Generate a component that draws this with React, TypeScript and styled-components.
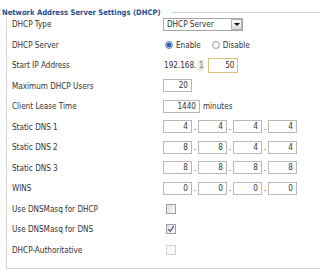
import React from 'react';
import styled, { createGlobalStyle } from 'styled-components';

const Global = createGlobalStyle`
  html, body { margin: 0; padding: 0; background: #fff; }
  body {
    font-family: "DejaVu Sans Condensed", "Liberation Sans", sans-serif;
    font-size: 8.1px;
    color: #333;
  }
`;

const Page = styled.div`
  width: 320px;
  height: 275px;
  overflow: hidden;
  padding-top: 6px;
  box-sizing: border-box;
`;

const Header = styled.div`
  position: relative;
  z-index: 1;
  display: flex;
  align-items: center;
  height: 13px;
  padding-left: 2px;
`;

const Title = styled.span`
  font-weight: bold;
  font-size: 7.6px;
  color: #1f4f93;
  background: #fff;
  padding-right: 10px;
  white-space: nowrap;
`;

const Rule = styled.div`
  flex: 1;
  height: 1px;
  background: #d4d4d4;
`;

const Body = styled.div`
  margin: -5px 0 0 6px;
  border-left: 1px solid #d4d4d4;
  border-bottom: 1px solid #d4d4d4;
  padding: 0 0 8px 5px;
`;

const Row = styled.div`
  display: grid;
  grid-template-columns: 151px 1fr;
  align-items: center;
  height: 20.5px;
`;

const Label = styled.span`
  white-space: nowrap;
`;

const Value = styled.div`
  display: flex;
  align-items: center;
  white-space: nowrap;
`;

const Select = styled.div`
  display: flex;
  width: 80px;
  height: 13px;
  border: 1px solid #a6a6a6;
  box-sizing: border-box;
  background: #fff;
`;

const SelectText = styled.span`
  flex: 1;
  padding-left: 3px;
  line-height: 11px;
`;

const SelectBtn = styled.span`
  width: 11px;
  border: 1px solid #b4b4b4;
  box-sizing: border-box;
  background: linear-gradient(#fbfbfb, #dcdcdc);
  display: flex;
  align-items: center;
  justify-content: center;
  &::after {
    content: "";
    border-left: 3px solid transparent;
    border-right: 3px solid transparent;
    border-top: 3px solid #111;
  }
`;

const Radio = styled.span<{ $on?: boolean }>`
  width: 8px;
  height: 8px;
  border-radius: 50%;
  border: 1px solid ${p => (p.$on ? '#6d83a8' : '#a4a4a4')};
  background: ${p =>
    p.$on
      ? 'radial-gradient(circle, #2d5db8 0 2px, #b9cbe6 2.6px, #eef2f8 4px)'
      : 'radial-gradient(circle, #fafafa 0 2px, #e3e3e3 4px)'};
  box-sizing: border-box;
  margin-left: 2px;
  margin-right: 3px;
`;

const RadioText = styled.span<{ $gap?: number }>`
  margin-right: ${p => p.$gap ?? 0}px;
`;

const Fixed = styled.span`
  margin-left: 1px;
`;

const Locked = styled.span`
  display: inline-block;
  width: 6px;
  text-align: center;
  background: #ececec;
  color: #777;
  margin-left: 2px;
  margin-right: 4px;
  line-height: 11px;
`;

const Box = styled.span<{ $w: number; $hot?: boolean }>`
  display: inline-block;
  width: ${p => p.$w}px;
  height: ${p => (p.$hot ? 15 : 13)}px;
  line-height: ${p => (p.$hot ? 13 : 11)}px;
  border: 1px solid ${p => (p.$hot ? '#dcc276' : '#b9b9b9')};
  box-sizing: border-box;
  text-align: right;
  padding-right: 3px;
  background: #fff;
`;

const Dot = styled.span`
  width: 6px;
  text-align: center;
`;

const Unit = styled.span`
  margin-left: 3px;
`;

const Check = styled.span<{ $dim?: boolean }>`
  width: 10px;
  height: 10px;
  margin-left: 3px;
  box-sizing: border-box;
  border: 1px solid ${p => (p.$dim ? '#d2d2d2' : '#a0a0a0')};
  background: ${p => (p.$dim ? '#f7f7f7' : 'linear-gradient(135deg, #dedede, #fafafa)')};
  display: flex;
  align-items: center;
  justify-content: center;
`;

const Tick = () => (
  <svg width="8" height="8" viewBox="0 0 8 8">
    <path d="M1.3 4.2 L3.2 6.3 L6.8 1.2" fill="none" stroke="#4b5c8c" strokeWidth="1.3" />
  </svg>
);

const IpBoxes = ({ parts }: { parts: string[] }) => (
  <Value>
    {parts.map((v, i) => (
      <React.Fragment key={i}>
        {i > 0 && <Dot>.</Dot>}
        <Box $w={29}>{v}</Box>
      </React.Fragment>
    ))}
  </Value>
);

export default function App() {
  return (
    <Page>
      <Global />
      <Header>
        <Title>Network Address Server Settings (DHCP)</Title>
        <Rule />
      </Header>
      <Body>
        <Row>
          <Label>DHCP Type</Label>
          <Value>
            <Select>
              <SelectText>DHCP Server</SelectText>
              <SelectBtn />
            </Select>
          </Value>
        </Row>
        <Row>
          <Label>DHCP Server</Label>
          <Value>
            <Radio $on />
            <RadioText $gap={9}>Enable</RadioText>
            <Radio />
            <RadioText>Disable</RadioText>
          </Value>
        </Row>
        <Row>
          <Label>Start IP Address</Label>
          <Value>
            <Fixed>192.168.</Fixed>
            <Locked>1</Locked>
            <Box $w={30} $hot>50</Box>
          </Value>
        </Row>
        <Row>
          <Label>Maximum DHCP Users</Label>
          <Value>
            <Box $w={29}>20</Box>
          </Value>
        </Row>
        <Row>
          <Label>Client Lease Time</Label>
          <Value>
            <Box $w={37}>1440</Box>
            <Unit>minutes</Unit>
          </Value>
        </Row>
        <Row>
          <Label>Static DNS 1</Label>
          <IpBoxes parts={['4', '4', '4', '4']} />
        </Row>
        <Row>
          <Label>Static DNS 2</Label>
          <IpBoxes parts={['8', '8', '4', '4']} />
        </Row>
        <Row>
          <Label>Static DNS 3</Label>
          <IpBoxes parts={['8', '8', '8', '8']} />
        </Row>
        <Row>
          <Label>WINS</Label>
          <IpBoxes parts={['0', '0', '0', '0']} />
        </Row>
        <Row>
          <Label>Use DNSMasq for DHCP</Label>
          <Value>
            <Check />
          </Value>
        </Row>
        <Row>
          <Label>Use DNSMasq for DNS</Label>
          <Value>
            <Check>
              <Tick />
            </Check>
          </Value>
        </Row>
        <Row>
          <Label>DHCP-Authoritative</Label>
          <Value>
            <Check $dim />
          </Value>
        </Row>
      </Body>
    </Page>
  );
}
